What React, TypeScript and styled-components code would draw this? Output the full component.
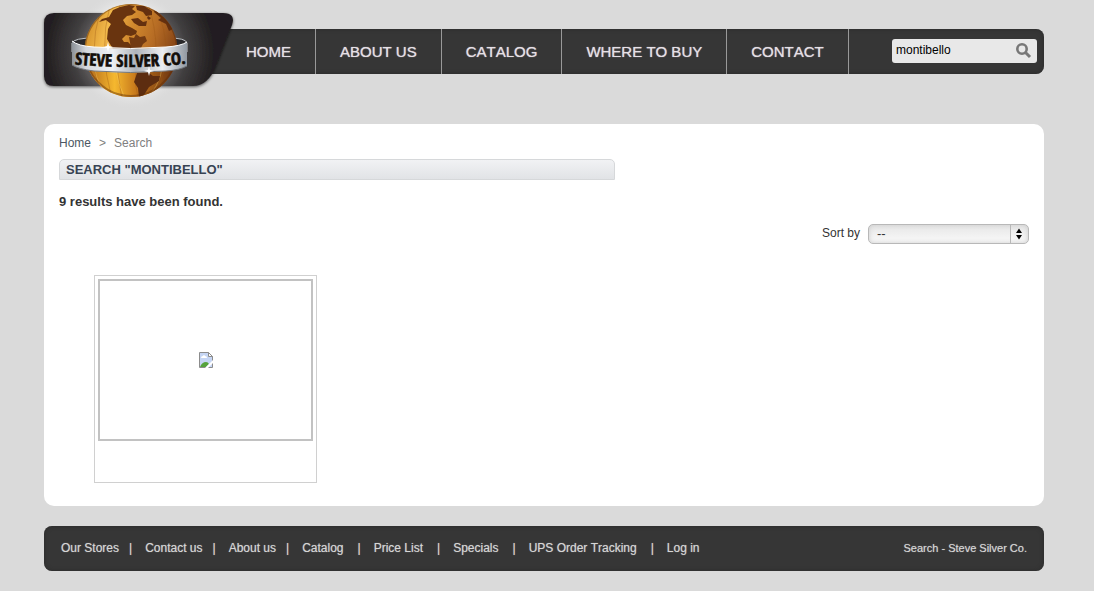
import React from "react";
import styled, { createGlobalStyle } from "styled-components";

const GlobalStyle = createGlobalStyle`
  * { box-sizing: border-box; }
  body {
    margin: 0;
    background: #dadada;
    color: #333;
    font: 12px/16px "Liberation Sans", Arial, sans-serif;
    font-kerning: none;
  }
  a { text-decoration: none; color: inherit; }
  h1, p, ul, ol { margin: 0; padding: 0; }
  ul, ol { list-style: none; }
`;

const Page = styled.div`
  padding: 29px 50px 20px 44px;
`;

const Bar = styled.div`
  display: flex;
  align-items: center;
  min-height: 45px;
  border-radius: 8px;
  background: #363636;
  box-shadow: inset 0 0 4px #2a2a2a;
`;

const Header = styled(Bar).attrs({ as: "header" })`
  position: relative;
  padding: 0 7px 0 178px;
  margin-bottom: 50px;
`;

const LogoLink = styled.a`
  position: absolute;
  left: -4px;
  top: -29px;
  line-height: 0;
`;

const NavList = styled.ul`
  display: flex;
`;

const NavItem = styled.li`
  border-right: 1px solid #999;
`;

const NavLink = styled.a`
  display: block;
  padding: 0 24px;
  font-size: 15px;
  line-height: 45px;
  color: #e6e0e6;
  text-shadow: 0 0 1px #c8c2c8;
  white-space: nowrap;
`;

const SearchForm = styled.form`
  display: flex;
  align-items: center;
  width: 145px;
  height: 24px;
  margin-left: auto;
  margin-bottom: 2px;
  padding: 0 5px 0 4px;
  border-radius: 3px;
  background: #e8e8e8;
`;

const SearchInput = styled.input`
  flex: 1;
  min-width: 0;
  height: 22px;
  padding: 0 0 2px;
  border: 0;
  outline: 0;
  background: transparent;
  color: #000;
  font: inherit;
`;

const SearchButton = styled.button`
  padding: 0;
  border: 0;
  background: none;
  line-height: 0;
  cursor: pointer;
`;

const Panel = styled.main`
  padding: 11px 15px 23px;
  margin-bottom: 20px;
  border-radius: 10px;
  background: #fff;
`;

const Crumbs = styled.ol`
  display: flex;
  gap: 8px;
  margin-bottom: 8px;
  color: #808080;
`;

const CrumbLink = styled.a`
  color: #4c5763;
`;

const Title = styled.h1`
  max-width: 556px;
  padding: 0 6px;
  border: 1px solid #d6d8da;
  border-radius: 5px 5px 0 0;
  background: linear-gradient(#f1f2f4, #e1e3e6);
  color: #374353;
  font-size: 13px;
  line-height: 19px;
`;

const Results = styled.p`
  margin: 14px 0;
  font-size: 13px;
  font-weight: bold;
`;

const SortRow = styled.div`
  display: flex;
  justify-content: flex-end;
  align-items: flex-start;
  gap: 8px;
`;

const SortLabel = styled.label`
  padding-top: 1px;
`;

const SelectWrap = styled.div`
  position: relative;
  width: 161px;
  line-height: 0;
`;

const SortSelect = styled.select`
  appearance: none;
  width: 100%;
  height: 20px;
  padding: 0 24px 0 8px;
  border: 1px solid #b8b8b8;
  border-radius: 5px;
  background: linear-gradient(#e6e6e6, #fafafa);
  box-shadow: inset 0 0 5px #ccc;
  color: #333;
  font: 13px/16px "Liberation Sans", Arial, sans-serif;
`;

const Stepper = styled.svg`
  position: absolute;
  right: 0;
  top: 0;
  pointer-events: none;
`;

const Products = styled.ul`
  display: flex;
  flex-wrap: wrap;
  gap: 20px;
  padding: 31px 35px 0;
`;

const Product = styled.li`
  width: 223px;
  height: 208px;
  padding: 3px;
  border: 1px solid #d0d0d0;
`;

const Thumb = styled.a`
  display: flex;
  align-items: center;
  justify-content: center;
  height: 162px;
  border: 2px solid #c2c2c2;
`;

const Footer = styled(Bar).attrs({ as: "footer" })`
  justify-content: space-between;
  padding: 0 17px 2px;
  color: #d6d6d6;
  text-shadow: 0 0 1px #999;
`;

const FooterLinks = styled.ul`
  display: flex;
`;

const FooterItem = styled.li<{ $wide: boolean }>`
  white-space: nowrap;

  &:not(:last-child)::after {
    content: "|";
    margin: 0 13px 0 ${(p) => (p.$wide ? 14 : 10)}px;
    color: #e4d6cf;
  }
`;

const PageName = styled.span`
  font-size: 11px;
`;

const navItems = ["Home", "About us", "Catalog", "Where to buy", "Contact"];

const footerItems = [
  { label: "Our Stores", wide: false },
  { label: "Contact us", wide: false },
  { label: "About us", wide: false },
  { label: "Catalog", wide: true },
  { label: "Price List", wide: true },
  { label: "Specials", wide: true },
  { label: "UPS Order Tracking", wide: true },
  { label: "Log in", wide: true },
];

function Logo() {
  return (
    <svg width="200" height="110" viewBox="0 0 200 110" role="img" aria-label="Steve Silver Co.">
      <defs>
        <radialGradient id="halo" cx="90" cy="50" r="60" gradientUnits="userSpaceOnUse">
          <stop offset="0" stopColor="#fff" stopOpacity=".9" />
          <stop offset=".75" stopColor="#f0f0f0" stopOpacity=".6" />
          <stop offset="1" stopColor="#dadada" stopOpacity="0" />
        </radialGradient>
        <radialGradient id="plate" cx="90" cy="52" r="88" gradientUnits="userSpaceOnUse">
          <stop offset=".45" stopColor="#686566" />
          <stop offset=".65" stopColor="#403e3f" />
          <stop offset=".95" stopColor="#231f20" />
        </radialGradient>
        <linearGradient id="wood" x1="44" y1="30" x2="138" y2="60" gradientUnits="userSpaceOnUse">
          <stop offset="0" stopColor="#d08c26" />
          <stop offset=".22" stopColor="#f3ba4c" />
          <stop offset=".45" stopColor="#d28a2e" />
          <stop offset=".7" stopColor="#b56b24" />
          <stop offset="1" stopColor="#793a12" />
        </linearGradient>
        <linearGradient id="woodLow" x1="50" y1="0" x2="132" y2="0" gradientUnits="userSpaceOnUse">
          <stop offset="0" stopColor="#b9701a" />
          <stop offset=".3" stopColor="#f5b82f" />
          <stop offset=".55" stopColor="#c87a1c" />
          <stop offset="1" stopColor="#6f3610" />
        </linearGradient>
        <linearGradient id="band" x1="32" y1="0" x2="148" y2="0" gradientUnits="userSpaceOnUse">
          <stop offset="0" stopColor="#8d9298" />
          <stop offset=".12" stopColor="#d4d7dc" />
          <stop offset=".35" stopColor="#eef0f3" />
          <stop offset=".55" stopColor="#aeb3ba" />
          <stop offset=".78" stopColor="#eceef1" />
          <stop offset="1" stopColor="#8e969f" />
        </linearGradient>
        <clipPath id="globe">
          <circle cx="91" cy="50.500" r="46.500" />
        </clipPath>
        <filter id="shade" x="-10%" y="-10%" width="120%" height="130%">
          <feDropShadow dx="0" dy="1" stdDeviation="1.500" floodColor="#000" floodOpacity=".6" />
        </filter>
      </defs>
      <rect width="200" height="110" fill="url(#halo)" />
      <path
        d="M14 13H183Q196 13 192 25L176 66Q168 86 153 86H14Q4 86 4 76V23Q4 13 14 13Z"
        fill="url(#plate)"
        filter="url(#shade)"
      />
      <path d="M32 43Q34 38 54 38H128Q146 38 147 43V52H32Z" fill="#29282a" stroke="#bfc2c6" strokeWidth="1" />
      <circle cx="91" cy="50.500" r="46.500" fill="url(#wood)" />
      <g clipPath="url(#globe)">
        <rect x="40" y="60" width="104" height="42" fill="url(#woodLow)" />
        <g stroke="#9b5714" strokeOpacity=".35" fill="none">
          <path d="M60 12Q48 50 60 96M70 5Q58 50 72 99M80 4Q72 50 82 99M96 68Q94 84 98 98M108 4Q124 50 108 98M116 8Q136 50 116 94" />
          <path d="M55 70Q58 86 68 94M76 70Q78 84 84 96M122 68Q120 82 112 92" stroke="#ffdb70" />
        </g>
        <path
          d="M62 19L69 17L73 10L80 7L89 5L95 6L92 9L96 12L92 15L87 16L83 20L86 25L92 28L97 31L96 34L91 36L86 35L82 39L84 42L88 42L91 45L97 45L99 49H73L70 44L67 39L68 29L71 24L66 20L59 22Z"
          fill="#69340f"
        />
        <path
          d="M96 6L104 6L112 11L112 15L106 16L103 12L97 10ZM91 19L98 18L103 22L107 21L106 26L99 26L94 23ZM108 16L111 18L109 20L107 18ZM116 7L127 17L133 29L129 31L126 24L118 20L121 18L114 12Z"
          fill="#64300f"
        />
        <path d="M89 37L94 38L96 34L100 37L105 36L107 41L103 44L101 48H91Z" fill="#723a12" />
        <path d="M97 73L108 72L113 76L120 76L119 81L109 87L104 95L99 98L98 88L94 82Z" fill="#5d2d10" />
        <circle cx="91" cy="50" r="46" fill="none" stroke="#5c2c0c" strokeOpacity=".45" strokeWidth="2" />
      </g>
      <path d="M32 41Q38 46 54 47Q91 50 126 47Q141 46 147 42V66Q140 70 126 71Q91 74 54 71Q38 69 32 65Z" fill="url(#band)" />
      <path d="M32 41Q38 46 54 47Q91 50 126 47Q141 46 147 42" fill="none" stroke="#fff" strokeWidth="1" />
      <path d="M32 65Q38 69 54 71Q91 74 126 71Q140 70 147 66" fill="none" stroke="#73777d" strokeWidth="1" />
      <path id="bandLine" d="M30 64Q60 67 91 67Q120 67 151 63" fill="none" />
      <text
        fill="#120d08"
        stroke="#120d08"
        strokeWidth=".6"
        fontFamily="'Liberation Sans Narrow', 'Open Sans Condensed', 'DejaVu Sans Condensed', sans-serif"
        fontWeight="bold"
        fontSize="17"
        textAnchor="middle"
      >
        <textPath href="#bandLine" startOffset="50%">
          STEVE SILVER CO.
        </textPath>
      </text>
      <path d="M68 42L69 46L73 47L69 48L68 52L67 48L63 47L67 46ZM109 66L110 70L114 71L110 72L109 76L108 72L104 71L108 70Z" fill="#fff" />
    </svg>
  );
}

function BrokenImage() {
  return (
    <svg width="14" height="16" viewBox="0 0 14 16" role="img" aria-label="Product">
      <path d="M.5.500H9.500L13.500 4.500V15.500H.5Z" fill="#c5d5f4" stroke="#8c8c8c" />
      <path d="M9.500.500V4.500H13.500Z" fill="#fff" stroke="#8c8c8c" />
      <path d="M2 6Q2 4 4 4Q5 2 6 4Q8 4 8 6Z" fill="#fff" />
      <path d="M1 15Q3 10 7 10Q9 10 10 12L7 15Z" fill="#55a33c" />
      <path d="M6 16L14 8V11L9 16Z" fill="#fff" />
    </svg>
  );
}

export default function App() {
  return (
    <>
      <GlobalStyle />
      <Page>
        <Header>
          <nav>
            <NavList>
              {navItems.map((label) => (
                <NavItem key={label}>
                  <NavLink href="#">{label.toUpperCase()}</NavLink>
                </NavItem>
              ))}
            </NavList>
          </nav>
          <LogoLink href="#">
            <Logo />
          </LogoLink>
          <SearchForm role="search" onSubmit={(e) => e.preventDefault()}>
            <SearchInput aria-label="Search" type="text" defaultValue="montibello" />
            <SearchButton type="submit" aria-label="Submit search">
              <svg width="16" height="16" viewBox="0 0 16 16" fill="none" stroke="#777">
                <circle cx="6" cy="6" r="4.700" strokeWidth="2.600" />
                <path d="M9.500 9.500L14 14" strokeWidth="3" />
              </svg>
            </SearchButton>
          </SearchForm>
        </Header>

        <Panel>
          <nav aria-label="Breadcrumb">
            <Crumbs>
              <li>
                <CrumbLink href="#">Home</CrumbLink>
              </li>
              <li aria-hidden="true">&gt;</li>
              <li>Search</li>
            </Crumbs>
          </nav>
          <Title>SEARCH "MONTIBELLO"</Title>
          <Results>9 results have been found.</Results>
          <SortRow>
            <SortLabel htmlFor="sort">Sort by</SortLabel>
            <SelectWrap>
              <SortSelect id="sort">
                <option>--</option>
              </SortSelect>
              <Stepper width="19" height="20" viewBox="0 0 19 20" aria-hidden="true">
                <path d="M.5 1V19" stroke="#b8b8b8" />
                <path d="M6 9L9 4.500L12 9ZM6 11L9 15.500L12 11Z" fill="#000" />
              </Stepper>
            </SelectWrap>
          </SortRow>
          <Products>
            <Product>
              <Thumb href="#">
                <BrokenImage />
              </Thumb>
            </Product>
          </Products>
        </Panel>

        <Footer>
          <FooterLinks>
            {footerItems.map(({ label, wide }) => (
              <FooterItem key={label} $wide={wide}>
                <a href="#">{label}</a>
              </FooterItem>
            ))}
          </FooterLinks>
          <PageName>Search - Steve Silver Co.</PageName>
        </Footer>
      </Page>
    </>
  );
}
